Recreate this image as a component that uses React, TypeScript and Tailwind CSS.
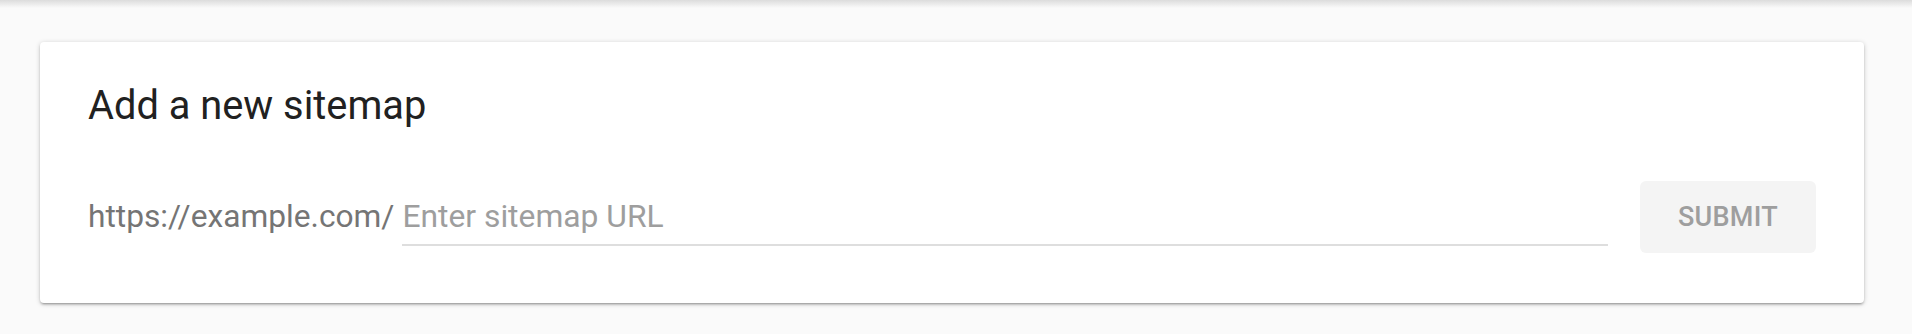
export default function App() {
  return (
    <div className="min-h-[334px] bg-[#fafafa] font-['Roboto',sans-serif]">
      {/* app bar shadow */}
      <div className="h-2 bg-gradient-to-b from-[#dcdcdc] to-[#fafafa]" />

      <div className="pt-[34px] pl-10 pr-12">
        <div className="rounded-[4px] bg-white px-12 pt-10 pb-[50px] shadow-[0_2px_2px_0_rgba(0,0,0,0.14),0_3px_1px_-2px_rgba(0,0,0,0.12),0_1px_5px_0_rgba(0,0,0,0.2)]">
          <h2 className="text-[39.8px] leading-[48px] font-normal text-[#212121]">Add a new sitemap</h2>

          <div className="mt-[51px] flex items-center gap-8">
            <div className="flex flex-1 items-baseline">
              <span className="mr-2 text-[31.7px] text-[#757575]">https://example.com/</span>
              <input
                type="text"
                placeholder="Enter sitemap URL"
                className="h-[58px] flex-1 border-b-2 border-[#dedede] bg-transparent text-[31.8px] text-[#212121] outline-none placeholder:text-[#9e9e9e]"
              />
            </div>
            <button
              type="button"
              disabled
              className="h-[72px] w-[176px] rounded-[6px] bg-[#f4f4f4] text-[27px] font-medium tracking-[0.3px] text-[#9e9e9e]"
            >
              SUBMIT
            </button>
          </div>
        </div>
      </div>
    </div>
  );
}
